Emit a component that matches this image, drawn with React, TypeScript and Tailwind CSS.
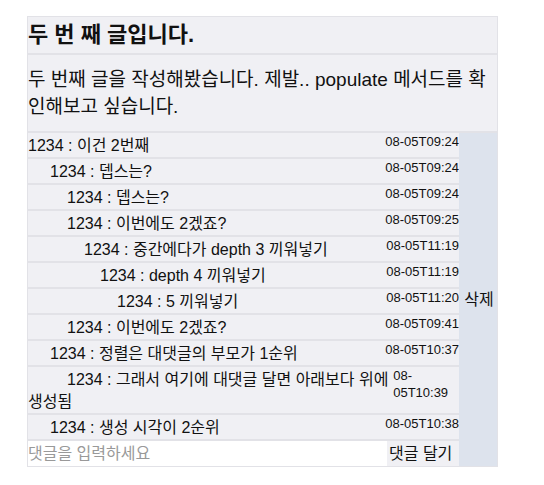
import React from 'react';

type Reply = { depth: number; text: string; date: string };

const replies: Reply[] = [
  { depth: 0, text: '1234 : 이건 2번째', date: '08-05T09:24' },
  { depth: 1, text: '1234 : 뎁스는?', date: '08-05T09:24' },
  { depth: 2, text: '1234 : 뎁스는?', date: '08-05T09:24' },
  { depth: 2, text: '1234 : 이번에도 2겠죠?', date: '08-05T09:25' },
  { depth: 3, text: '1234 : 중간에다가 depth 3 끼워넣기', date: '08-05T11:19' },
  { depth: 4, text: '1234 : depth 4 끼워넣기', date: '08-05T11:19' },
  { depth: 5, text: '1234 : 5 끼워넣기', date: '08-05T11:20' },
  { depth: 2, text: '1234 : 이번에도 2겠죠?', date: '08-05T09:41' },
  { depth: 1, text: '1234 : 정렬은 대댓글의 부모가 1순위', date: '08-05T10:37' },
  { depth: 2, text: '1234 : 그래서 여기에 대댓글 달면 아래보다 위에 생성됨', date: '08-05T10:39' },
  { depth: 1, text: '1234 : 생성 시각이 2순위', date: '08-05T10:38' },
];

// indent widths per depth, written out so tailwind picks them up
const indents = ['w-0', 'w-[22px]', 'w-[39px]', 'w-[56px]', 'w-[72px]', 'w-[89px]'];

export default function App() {
  return (
    <div className="min-h-screen bg-white pt-[16px] pl-[27px] font-['Liberation_Sans','Noto_Sans_CJK_KR',sans-serif] text-[#111]">
      <div className="w-[471px] border border-[#e2e2e7] bg-[#f0f0f4]">
        {/* post title */}
        <h1 className="h-[38px] border-b-2 border-[#e2e2e7] text-[22px] font-bold leading-[36px]">
          두 번 째 글입니다.
        </h1>

        {/* post body */}
        <p className="border-b-2 border-[#e2e2e7] pt-[11px] pb-[11px] text-[19px] leading-[27px]">
          두 번째 글을 작성해봤습니다. 제발.. populate 메서드를 확인해보고 싶습니다.
        </p>

        <div className="flex">
          <div className="flex min-w-0 flex-1 flex-col">
            {replies.map((r, i) => (
              <div key={i} className="flex justify-between border-b-2 border-[#e2e2e7]">
                <span className="pt-[2px] text-[16px] leading-[22px]">
                  <span className={`inline-block ${indents[r.depth]}`}></span>
                  {r.text}
                </span>
                <span className="text-[13px] leading-[17px]">{r.date}</span>
              </div>
            ))}

            {/* comment form */}
            <div className="flex h-[25px]">
              <input
                className="min-w-0 flex-1 bg-white text-[16px] outline-none placeholder:text-[#999]"
                placeholder="댓글을 입력하세요"
              />
              <button className="w-[72px] pl-[2px] text-left text-[16px]">댓글 달기</button>
            </div>
          </div>

          <button className="w-[38px] bg-[#dde3ed] pl-[2px] text-[16px]">삭제</button>
        </div>
      </div>
    </div>
  );
}
